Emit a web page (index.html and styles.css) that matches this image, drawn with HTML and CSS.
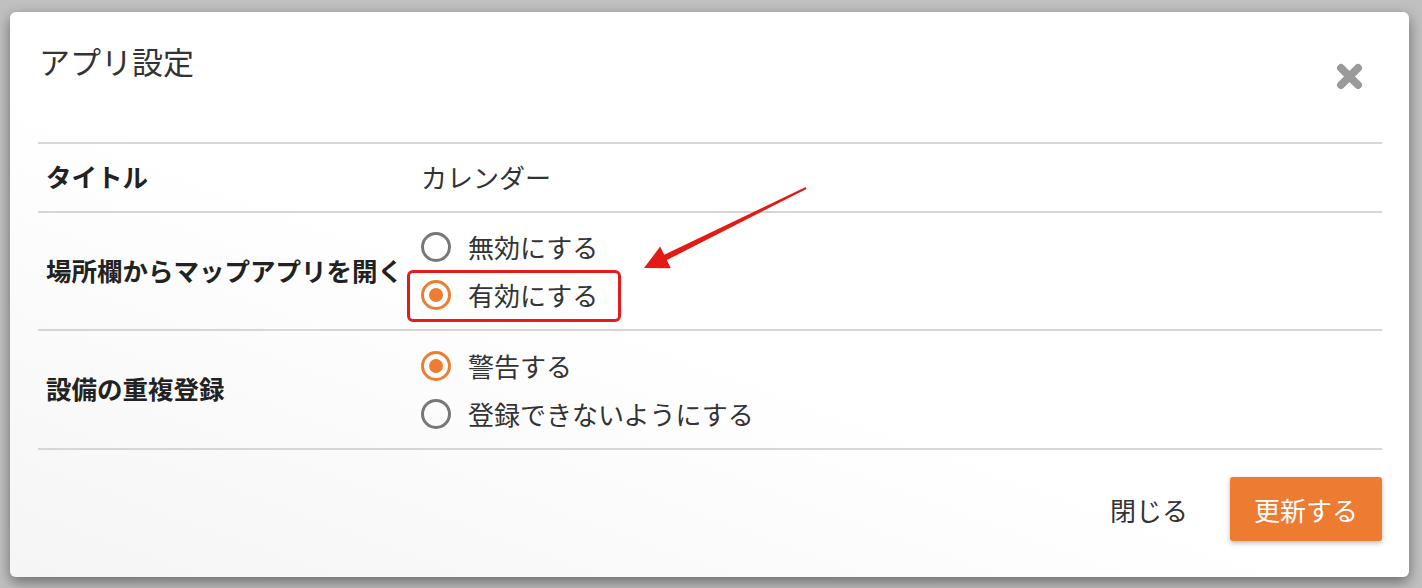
FILE: index.html
```html
<!DOCTYPE html>
<html lang="ja">
  <head>
    <meta charset="UTF-8" />
    <title>アプリ設定</title>
    <link rel="stylesheet" href="styles.css">
  </head>
  <body>
    <div class="modal">
      <div class="modal-header">
        <h2>アプリ設定</h2>
        <button class="close" type="button" aria-label="閉じる">
          <svg width="27" height="27" viewBox="0 0 27 27">
            <path d="M5 5 L22 22 M22 5 L5 22" stroke="#9a9a9a" stroke-width="8" stroke-linecap="round" />
          </svg>
        </button>
      </div>

      <div class="settings">
        <div class="row row-title">
          <div class="label">タイトル</div>
          <div class="value">カレンダー</div>
        </div>
        <div class="row">
          <div class="label">場所欄からマップアプリを開く</div>
          <div class="value">
            <label class="option"><span class="radio"></span>無効にする</label>
            <label class="option"><span class="radio checked"></span>有効にする<span class="highlight"></span></label>
          </div>
        </div>
        <div class="row row-last">
          <div class="label">設備の重複登録</div>
          <div class="value">
            <label class="option"><span class="radio checked"></span>警告する</label>
            <label class="option"><span class="radio"></span>登録できないようにする</label>
          </div>
        </div>
      </div>

      <div class="modal-footer">
        <button class="btn-close" type="button">閉じる</button>
        <button class="btn-save" type="button">更新する</button>
      </div>
    </div>

    <!-- annotation arrow -->
    <svg class="arrow" width="1422" height="588" viewBox="0 0 1422 588">
      <polygon fill="#e31b14" points="644,268 660.2,246.6 664.2,254.7 805.6,187.1 806.4,188.9 666.8,260.1 670.8,268.2" />
    </svg>
  </body>
</html>
```

FILE: styles.css
```css
body {
  margin: 0;
  padding: 12px 13px 11px 10px;
  background: #c0c0c0;
  font-family: "Noto Sans CJK JP", "Noto Sans", sans-serif;
  color: #333;
}

.modal {
  height: 565px;
  box-sizing: border-box;
  padding: 0 27px 0 28px;
  background: linear-gradient(20deg, #f5f5f5 0%, #ffffff 45%);
  border-radius: 6px;
  box-shadow: 0 5px 14px rgba(0, 0, 0, 0.45);
}

.modal-header {
  display: flex;
  justify-content: space-between;
  height: 130px;
  border-bottom: 2px solid #d6d6d6;
}

.modal-header h2 {
  margin: 0;
  padding: 27px 0 0 1px;
  font-size: 31px;
  font-weight: 400;
  line-height: 44px;
  color: #333;
}

.close {
  align-self: flex-start;
  margin: 51px 19px 0 0;
  padding: 0;
  border: none;
  background: none;
  cursor: pointer;
  width: 27px;
  height: 27px;
}

.row {
  display: flex;
  align-items: center;
  min-height: 116px;
  border-bottom: 2px solid #d6d6d6;
  font-size: 26px;
  line-height: 1;
}

.row-title {
  min-height: 67px;
}

.row-last {
  min-height: 117px;
}

.label {
  width: 375px;
  padding: 0 0 3px 8px;
  font-size: 25.5px;
  font-weight: 700;
  color: #222;
  white-space: nowrap;
}

.value {
  display: flex;
  flex-direction: column;
  color: #333;
}

.row-title .value {
  padding-bottom: 2px;
}

.option {
  position: relative;
  display: flex;
  align-items: center;
  height: 48px;
}

.option-text {
  padding-bottom: 2px;
}

.radio {
  width: 30px;
  height: 30px;
  box-sizing: border-box;
  margin: 0 17px 0 0;
  border: 3px solid #777;
  border-radius: 50%;
  display: flex;
  align-items: center;
  justify-content: center;
}

.radio.checked {
  border-color: #ee7d31;
}

.radio.checked::after {
  content: "";
  width: 14px;
  height: 14px;
  border-radius: 50%;
  background: #ee7d31;
}

.highlight {
  position: absolute;
  left: -14px;
  top: -1px;
  width: 214px;
  height: 52px;
  box-sizing: border-box;
  border: 3px solid #e31b1b;
  border-radius: 6px;
}

.modal-footer {
  display: flex;
  justify-content: flex-end;
  align-items: center;
  gap: 22px;
  padding-top: 27px;
}

.btn-close {
  padding: 0 20px 0 18px;
  border: none;
  background: none;
  font-family: inherit;
  font-size: 26px;
  color: #333;
  cursor: pointer;
}

.btn-save {
  width: 152px;
  height: 64px;
  border: none;
  border-radius: 3px;
  background: #ed7b31;
  color: #fff;
  font-family: inherit;
  font-size: 26px;
  box-shadow: 0 2px 5px rgba(0, 0, 0, 0.28);
  cursor: pointer;
}

.arrow {
  position: absolute;
  left: 0;
  top: 0;
  pointer-events: none;
}
```
